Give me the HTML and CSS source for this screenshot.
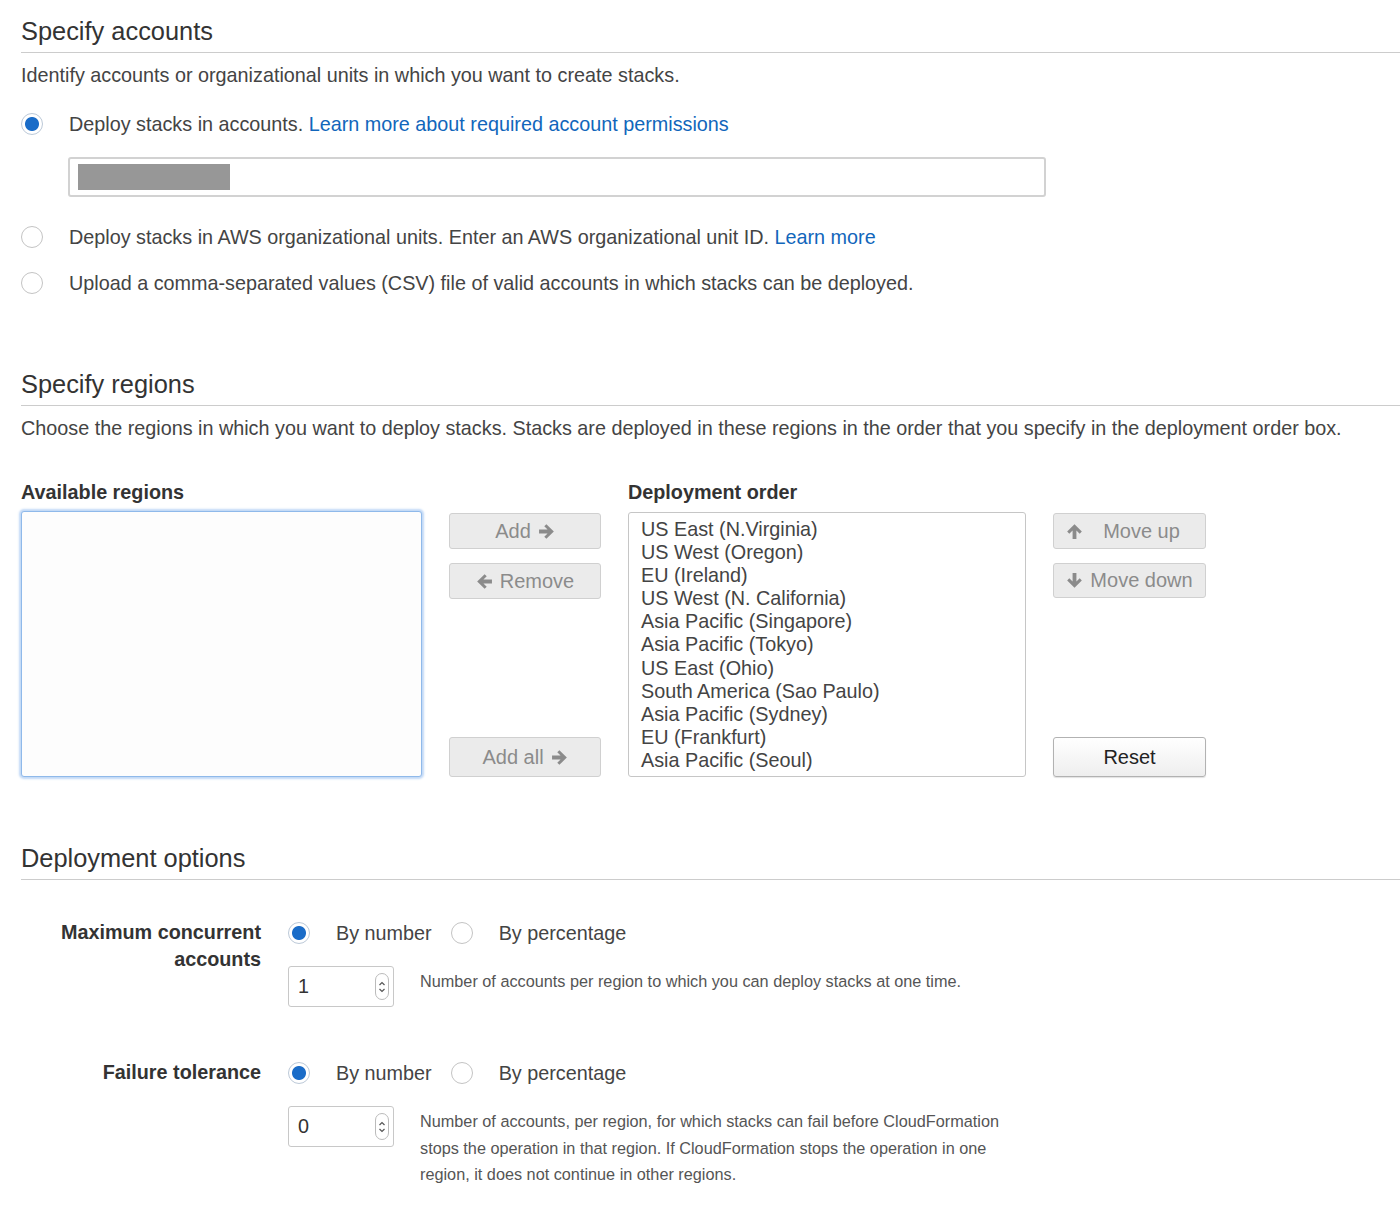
FILE: index.html
```html
<html>
    <head>
        <title>Create StackSet - Set deployment options</title>
        <link rel="stylesheet" href="styles.css">
    </head>
    <body>
        <div class="page">
            <h2 class="section-title">Specify accounts</h2>
            <p class="section-desc">Identify accounts or organizational units in which you want to create stacks.</p>

            <label class="choice">
                <input type="radio" name="target" checked>
                <span>Deploy stacks in accounts. <a href="#">Learn more about required account permissions</a></span>
            </label>
            <div class="accounts-field"><span class="redacted"></span></div>
            <label class="choice">
                <input type="radio" name="target">
                <span>Deploy stacks in AWS organizational units. Enter an AWS organizational unit ID. <a href="#">Learn more</a></span>
            </label>
            <label class="choice choice-last">
                <input type="radio" name="target">
                <span>Upload a comma-separated values (CSV) file of valid accounts in which stacks can be deployed.</span>
            </label>

            <h2 class="section-title">Specify regions</h2>
            <p class="section-desc">Choose the regions in which you want to deploy stacks. Stacks are deployed in these regions in the order that you specify in the deployment order box.</p>

            <div class="regions">
                <div class="list-label">Available regions</div>
                <div></div>
                <div class="list-label">Deployment order</div>
                <div></div>

                <div class="region-list available"></div>
                <div class="button-stack">
                    <button class="btn" disabled>Add <svg class="icon" viewBox="0 0 16 16"><path d="M1 6.2h8L5.9 3.1l2-2L14.9 8l-7 6.9-2-2 3.1-3.1H1z"/></svg></button>
                    <button class="btn" disabled><svg class="icon" viewBox="0 0 16 16"><path d="M15 6.2H7l3.1-3.1-2-2L1.1 8l7 6.9 2-2L7 9.8h8z"/></svg> Remove</button>
                    <button class="btn btn-tall push-down" disabled>Add all <svg class="icon" viewBox="0 0 16 16"><path d="M1 6.2h8L5.9 3.1l2-2L14.9 8l-7 6.9-2-2 3.1-3.1H1z"/></svg></button>
                </div>
                <ul class="region-list ordered">
                    <li>US East (N.Virginia)</li>
                    <li>US West (Oregon)</li>
                    <li>EU (Ireland)</li>
                    <li>US West (N. California)</li>
                    <li>Asia Pacific (Singapore)</li>
                    <li>Asia Pacific (Tokyo)</li>
                    <li>US East (Ohio)</li>
                    <li>South America (Sao Paulo)</li>
                    <li>Asia Pacific (Sydney)</li>
                    <li>EU (Frankfurt)</li>
                    <li>Asia Pacific (Seoul)</li>
                </ul>
                <div class="button-stack">
                    <button class="btn btn-move" disabled><svg class="icon" viewBox="0 0 16 16"><path d="M6.2 15V7L3.1 10.1l-2-2L8 1.1l6.9 7-2 2L9.8 7v8z"/></svg><span>Move up</span></button>
                    <button class="btn btn-move btn-short" disabled><svg class="icon" viewBox="0 0 16 16"><path d="M6.2 1v8L3.1 5.9l-2 2L8 14.9l6.9-7-2-2L9.8 9V1z"/></svg><span>Move down</span></button>
                    <button class="btn btn-tall btn-active push-down">Reset</button>
                </div>
            </div>

            <h2 class="section-title">Deployment options</h2>

            <div class="options">
                <div class="option-label">Maximum concurrent<br>accounts</div>
                <div class="option-body">
                    <div class="radio-row">
                        <label class="inline-choice"><input type="radio" name="concurrent" checked> By number</label>
                        <label class="inline-choice"><input type="radio" name="concurrent"> By percentage</label>
                    </div>
                    <div class="field-row">
                        <div class="number-field">
                            <span>1</span>
                            <span class="spinner"><svg viewBox="0 0 8 16"><path d="M1.5 6 4 3.5 6.5 6M1.5 10 4 12.5 6.5 10"/></svg></span>
                        </div>
                        <p class="help">Number of accounts per region to which you can deploy stacks at one time.</p>
                    </div>
                </div>

                <div class="option-label">Failure tolerance</div>
                <div class="option-body">
                    <div class="radio-row">
                        <label class="inline-choice"><input type="radio" name="tolerance" checked> By number</label>
                        <label class="inline-choice"><input type="radio" name="tolerance"> By percentage</label>
                    </div>
                    <div class="field-row">
                        <div class="number-field">
                            <span>0</span>
                            <span class="spinner"><svg viewBox="0 0 8 16"><path d="M1.5 6 4 3.5 6.5 6M1.5 10 4 12.5 6.5 10"/></svg></span>
                        </div>
                        <p class="help">Number of accounts, per region, for which stacks can fail before CloudFormation stops the operation in that region. If CloudFormation stops the operation in one region, it does not continue in other regions.</p>
                    </div>
                </div>
            </div>
        </div>
    </body>
</html>
```

FILE: styles.css
```css
body {
    margin: 0;
    font-family: "Liberation Sans", Arial, sans-serif;
    font-size: 19.8px;
    color: #444444;
    background-color: #ffffff;
}

.page {
    padding: 16px 0 40px 21px;
}

a {
    color: #1166bb;
    text-decoration: none;
}

/* section headings */

.section-title {
    margin: 0;
    padding-bottom: 6px;
    font-size: 25.4px;
    font-weight: normal;
    line-height: 30px;
    color: #333333;
    border-bottom: 1px solid #cccccc;
}

.section-desc {
    margin: 8px 0 0 0;
    line-height: 28px;
}

/* radios */

input[type="radio"] {
    appearance: none;
    -webkit-appearance: none;
    flex: none;
    width: 22px;
    height: 22px;
    margin: 0;
    border: 1px solid #c4c4c4;
    border-radius: 50%;
    background-color: #ffffff;
}

input[type="radio"]:checked {
    border-color: #bcc9d8;
    background: radial-gradient(circle, #1a6cc8 0, #1a6cc8 6.5px, #ffffff 7.5px);
}

.choice {
    display: flex;
    align-items: center;
    gap: 26px;
    height: 28px;
    margin-top: 21px;
}

.choice + .choice {
    margin-top: 18px;
}

.accounts-field + .choice {
    margin-top: 26px;
}

.choice-last {
    margin-bottom: 72px;
}

.accounts-field {
    display: flex;
    align-items: center;
    width: 958px;
    height: 36px;
    margin: 19px 0 0 47px;
    padding: 0 8px;
    border: 2px solid #d2d2d2;
    border-radius: 3px;
}

.redacted {
    width: 152px;
    height: 26px;
    background-color: #979797;
}

/* regions */

.regions {
    display: grid;
    grid-template-columns: 401px 152px 398px 153px;
    column-gap: 27px;
    margin: 38px 0 66px 0;
}

.list-label {
    font-weight: bold;
    color: #333333;
    line-height: 24px;
    margin-bottom: 6px;
}

.region-list {
    box-sizing: border-box;
    height: 266px;
    margin: 0;
    border-radius: 3px;
}

.available {
    margin-top: 1px;
    border: 1px solid #8fb9ea;
    box-shadow: 0 0 2px 2px rgba(120, 170, 235, 0.45);
    background-color: #fdfdfd;
}

.ordered {
    list-style: none;
    margin-top: 2px;
    height: 265px;
    padding: 5px 12px;
    border: 1px solid #c6c6c6;
    color: #444444;
}

.ordered li {
    line-height: 23.1px;
}

.button-stack {
    display: flex;
    flex-direction: column;
    gap: 14px;
    margin-top: 3px;
}

.btn {
    display: flex;
    align-items: center;
    justify-content: center;
    gap: 7px;
    height: 36px;
    padding: 0 12px;
    font-family: inherit;
    font-size: 20px;
    color: #8b8b8b;
    background-color: #ebebeb;
    border: 1px solid #d0d0d0;
    border-radius: 3px;
}

.btn .icon {
    width: 17px;
    height: 17px;
    fill: #8b8b8b;
}

.btn-move span {
    flex: 1;
    text-align: center;
}

.btn-short {
    height: 35px;
}

.btn-tall {
    height: 40px;
}

.push-down {
    margin-top: auto;
}

.btn-active {
    color: #222222;
    background: linear-gradient(#ffffff, #eeeeee);
    border-color: #b2b2b2;
    box-shadow: 0 1px 1px rgba(0, 0, 0, 0.12);
}

/* deployment options */

.options {
    display: grid;
    grid-template-columns: 240px 1fr;
    column-gap: 27px;
    row-gap: 52px;
    margin-top: 39px;
}

.option-label {
    text-align: right;
    font-weight: bold;
    color: #333333;
    line-height: 27px;
}

.radio-row {
    display: flex;
    align-items: center;
    gap: 19px;
    height: 28px;
}

.inline-choice {
    display: flex;
    align-items: center;
    gap: 26px;
}

.field-row {
    display: flex;
    align-items: flex-start;
    gap: 26px;
    margin-top: 19px;
}

.number-field {
    box-sizing: border-box;
    display: flex;
    align-items: center;
    justify-content: space-between;
    width: 106px;
    height: 41px;
    padding: 0 4px 0 9px;
    border: 1px solid #c8c8c8;
    border-radius: 3px;
    color: #333333;
    flex: none;
}

.spinner {
    display: flex;
    align-items: center;
    justify-content: center;
    width: 12px;
    height: 25px;
    border: 1px solid #bbbbbb;
    border-radius: 7px;
}

.spinner svg {
    width: 8px;
    height: 16px;
    fill: none;
    stroke: #555555;
    stroke-width: 1.2;
}

.help {
    margin: 2px 0 0 0;
    max-width: 590px;
    font-size: 16.25px;
    line-height: 26.5px;
    color: #555555;
}
```
